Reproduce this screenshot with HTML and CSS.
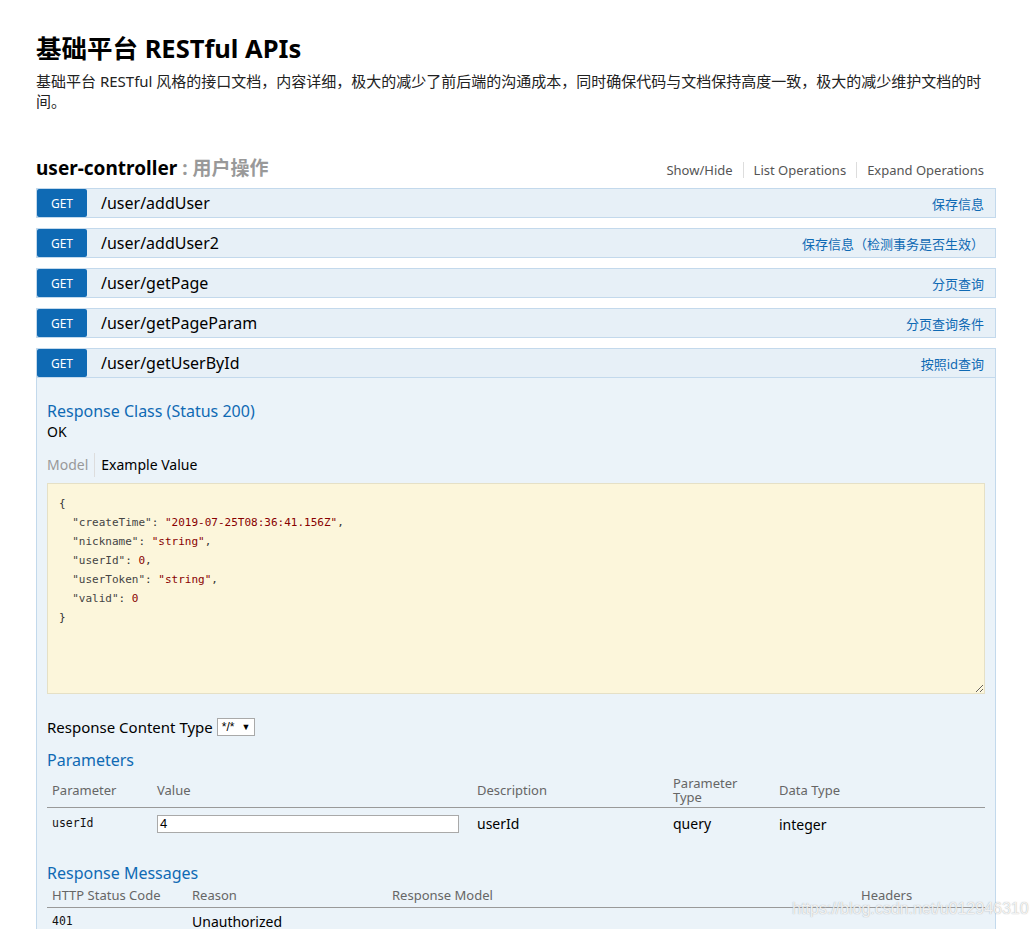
FILE: index.html
```html
<!DOCTYPE html>
<html lang="zh-CN">
<head>
<meta charset="utf-8">
<title>基础平台 RESTful APIs</title>
<link rel="stylesheet" href="styles.css">
</head>
<body>
<div class="page">
  <div class="info">
    <h1 class="info-title">基础平台 RESTful APIs</h1>
    <p class="info-desc">基础平台 RESTful 风格的接口文档，内容详细，极大的减少了前后端的沟通成本，同时确保代码与文档保持高度一致，极大的减少维护文档的时间。</p>
  </div>

  <div class="resource">
    <div class="resource-head">
      <h2 class="res-title"><span class="res-name">user-controller</span><span class="res-desc"> : 用户操作</span></h2>
      <ul class="options">
        <li class="opt">Show/Hide</li>
        <li class="opt">List Operations</li>
        <li class="opt">Expand Operations</li>
      </ul>
    </div>

    <ul class="ops">
      <li class="op">
        <div class="op-head"><span class="method">GET</span><span class="path">/user/addUser</span><span class="summary">保存信息</span></div>
      </li>
      <li class="op">
        <div class="op-head"><span class="method">GET</span><span class="path">/user/addUser2</span><span class="summary">保存信息（检测事务是否生效）</span></div>
      </li>
      <li class="op">
        <div class="op-head"><span class="method">GET</span><span class="path">/user/getPage</span><span class="summary">分页查询</span></div>
      </li>
      <li class="op">
        <div class="op-head"><span class="method">GET</span><span class="path">/user/getPageParam</span><span class="summary">分页查询条件</span></div>
      </li>
      <li class="op">
        <div class="op-head"><span class="method">GET</span><span class="path">/user/getUserById</span><span class="summary">按照id查询</span></div>
        <div class="op-content">
          <h4 class="sec-title">Response Class (Status 200)</h4>
          <div class="ok">OK</div>
          <div class="tabs">
            <span class="tab tab-off">Model</span>
            <span class="tab tab-on">Example Value</span>
          </div>
          <div class="code"><div class="code-line">{</div><div class="code-line">  <span class="k">"createTime"</span>: <span class="s">"2019-07-25T08:36:41.156Z"</span>,</div><div class="code-line">  <span class="k">"nickname"</span>: <span class="s">"string"</span>,</div><div class="code-line">  <span class="k">"userId"</span>: <span class="s">0</span>,</div><div class="code-line">  <span class="k">"userToken"</span>: <span class="s">"string"</span>,</div><div class="code-line">  <span class="k">"valid"</span>: <span class="s">0</span></div><div class="code-line">}</div></div>

          <div class="rct">
            <span class="rct-label">Response Content Type</span>
            <span class="fake-select"><span class="sel-val">*/*</span><span class="sel-arrow">▼</span></span>
          </div>

          <h4 class="sec-title params-title">Parameters</h4>
          <table class="tbl">
            <colgroup>
              <col class="c-p1"><col class="c-p2"><col class="c-p3"><col class="c-p4"><col class="c-p5">
            </colgroup>
            <thead>
              <tr><th>Parameter</th><th>Value</th><th>Description</th><th>Parameter<br>Type</th><th>Data Type</th></tr>
            </thead>
            <tbody>
              <tr>
                <td class="mono">userId</td>
                <td><span class="input">4</span></td>
                <td>userId</td>
                <td>query</td>
                <td class="dt">integer</td>
              </tr>
            </tbody>
          </table>

          <h4 class="sec-title msgs-title">Response Messages</h4>
          <table class="tbl tbl-msgs">
            <colgroup>
              <col class="c-m1"><col class="c-m2"><col class="c-m3"><col class="c-m4">
            </colgroup>
            <thead>
              <tr><th>HTTP Status Code</th><th>Reason</th><th>Response Model</th><th>Headers</th></tr>
            </thead>
            <tbody>
              <tr><td class="mono">401</td><td>Unauthorized</td><td></td><td></td></tr>
            </tbody>
          </table>
        </div>
      </li>
    </ul>
  </div>
  <div class="watermark">https://blog.csdn.net/u012946310</div>
</div>
</body>
</html>
```

FILE: styles.css
```css
* { box-sizing: border-box; }

html, body {
  margin: 0;
  padding: 0;
  background: #ffffff;
}

body {
  font-family: "Noto Sans", "Noto Sans CJK SC", sans-serif;
  color: #000;
}

.page {
  position: relative;
  padding: 33px 0 0 36px;
  width: 1036px;
  height: 929px;
  overflow: hidden;
}

/* info */
.info-title {
  margin: 0;
  font-size: 25.5px;
  line-height: 30px;
  font-weight: 700;
}

.info-desc {
  margin: 8px 0 0;
  width: 960px;
  font-size: 15px;
  line-height: 20px;
  color: #222;
}

/* resource */
.resource {
  margin-top: 45px;
  width: 960px;
}

.resource-head {
  display: flex;
  justify-content: space-between;
  align-items: baseline;
}

.res-title {
  margin: 0;
  font-size: 19px;
  line-height: 24px;
  font-weight: 700;
}

.res-name { color: #000; }
.res-desc { color: #999; }

.options {
  list-style: none;
  margin: 0 2px 0 0;
  padding: 0;
  display: flex;
}

.opt {
  font-size: 13px;
  line-height: 16px;
  color: #555;
  padding: 0 10px;
  border-left: 1px solid #ddd;
}

.opt:first-child { border-left: none; }

/* operations */
.ops {
  list-style: none;
  margin: 8px 0 0;
  padding: 0;
}

.op { margin-bottom: 10px; }

.op-head {
  display: flex;
  align-items: center;
  height: 30px;
  background: #e7f0f7;
  border: 1px solid #c3d9ec;
}

.method {
  flex: 0 0 50px;
  height: 28px;
  background: #0f6ab4;
  color: #fff;
  font-size: 12px;
  display: flex;
  align-items: center;
  justify-content: center;
  border-radius: 2px;
}

.path {
  flex: 1;
  margin-left: 14px;
  font-size: 16px;
  line-height: 20px;
  color: #000;
}

.summary {
  font-size: 13px;
  color: #0f6ab4;
  padding-right: 11px;
}

/* expanded content */
.op-content {
  background: #ebf3f9;
  border: 1px solid #c3d9ec;
  border-top: none;
  padding: 22px 10px 20px;
}

.sec-title {
  margin: 0;
  font-size: 16px;
  line-height: 22px;
  font-weight: normal;
  color: #0f6ab4;
}

.ok {
  font-size: 14px;
  line-height: 20px;
}

.tabs {
  display: flex;
  margin-top: 11px;
}

.tab {
  font-size: 14px;
  line-height: 20px;
  padding: 2px 6px;
}

.tab-off {
  color: #999;
  padding-left: 0;
}

.tab-on {
  color: #000;
  border-left: 1px solid #ddd;
}

.code {
  margin-top: 6px;
  height: 211px;
  background: #fcf6db;
  border: 1px solid #e5e0c6;
  padding: 10px 11px;
  font-family: "DejaVu Sans Mono", "Liberation Mono", monospace;
  font-size: 11px;
  line-height: 19px;
  color: #333;
  white-space: pre;
  overflow: auto;
  resize: both;
}

.code .k { color: #444; }
.code .s { color: #880000; }

.rct {
  display: flex;
  align-items: center;
  height: 20px;
  margin-top: 23px;
  font-size: 15px;
}

.fake-select {
  display: inline-flex;
  align-items: center;
  height: 18px;
  margin-left: 4px;
  padding: 0 4px;
  border: 1px solid #a9a9a9;
  background: #fff;
  font-family: "Liberation Sans", sans-serif;
  font-size: 12px;
  color: #000;
}

.sel-arrow {
  margin-left: 7px;
  font-size: 9px;
}

.params-title { margin-top: 12px; }
.msgs-title { margin-top: 21px; }

/* tables */
.tbl {
  width: 938px;
  table-layout: fixed;
  border-collapse: collapse;
  margin-top: 2px;
}

.c-p1 { width: 105px; }
.c-p2 { width: 320px; }
.c-p3 { width: 196px; }
.c-p4 { width: 106px; }
.c-p5 { width: 211px; }

.c-m1 { width: 140px; }
.c-m2 { width: 200px; }
.c-m3 { width: 469px; }
.c-m4 { width: 129px; }

.tbl th {
  text-align: left;
  font-weight: normal;
  font-size: 13px;
  line-height: 13.5px;
  color: #666;
  padding: 4px 5px 3px;
  vertical-align: middle;
  border-bottom: 1px solid #999;
}

.tbl-msgs { margin-top: 0; }

.tbl-msgs th { padding: 5px 5px 4px; }

.tbl td {
  font-size: 14px;
  line-height: 18px;
  padding: 7px 5px;
  vertical-align: top;
  color: #000;
}

.tbl-msgs td { padding: 5px 5px; }

.tbl td.mono {
  font-family: "DejaVu Sans Mono", "Liberation Mono", monospace;
  font-size: 11.5px;
  line-height: 16px;
  color: #111;
}

.tbl td.dt { padding-top: 8px; }

.input {
  display: block;
  width: 302px;
  height: 18px;
  border: 1px solid #a9a9a9;
  background: #fff;
  padding: 0 2px;
  font-family: "Liberation Sans", sans-serif;
  font-size: 13px;
  line-height: 16px;
}

.watermark {
  position: absolute;
  left: 792px;
  top: 900px;
  font-family: "Liberation Sans", Arial, sans-serif;
  font-size: 16px;
  color: rgba(255, 255, 255, 0.85);
  text-shadow: 0 0 1px rgba(120, 120, 120, 0.7);
  white-space: nowrap;
}
```
